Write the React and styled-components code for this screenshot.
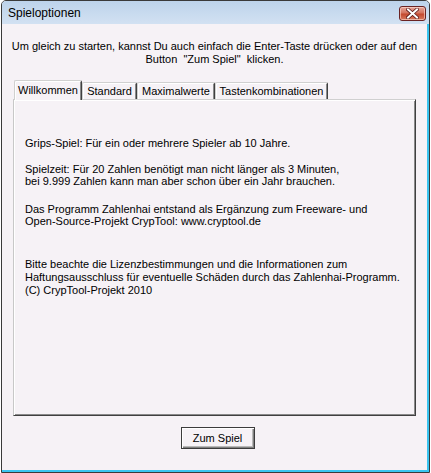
import React from "react";
import styled, { createGlobalStyle } from "styled-components";

const GlobalStyle = createGlobalStyle`
  html, body { margin: 0; padding: 0; background: #ffffff; }
  body { font-family: "Liberation Sans", Arial, sans-serif; }
  * { box-sizing: border-box; }
`;

const Window = styled.div`
  margin-left: 1px;
  width: 429px;
  height: 473px;
  border: 1px solid #3a3a3a;
  border-radius: 5px 5px 0 0;
  display: flex;
  flex-direction: column;
  overflow: hidden;
  background: #f6f2f6;
`;

const TitleBar = styled.div`
  height: 23px;
  flex: none;
  display: flex;
  align-items: flex-start;
  justify-content: space-between;
  padding: 5px 3px 0 6px;
  background: linear-gradient(#bdd3eb, #d2e1f2);
`;

const Title = styled.div`
  font-family: "Liberation Sans", Arial, sans-serif;
  font-size: 12px;
  line-height: 15px;
  color: #000;
`;

const CloseButton = styled.div`
  width: 27px;
  height: 15px;
  border: 1px solid #6a2323;
  border-radius: 3px;
  background: linear-gradient(#e6a69a 0%, #d4745f 45%, #c4492f 55%, #d77a5f 100%);
  box-shadow: inset 0 0 0 1px rgba(255, 220, 210, 0.6);
  display: flex;
  align-items: center;
  justify-content: center;
`;

const Client = styled.div`
  flex: 1;
  display: flex;
  flex-direction: column;
  border-right: 2px solid #39c4ef;
  border-bottom: 2px solid #39c4ef;
  background: #f6f2f6;
`;

const Intro = styled.p`
  margin: 16px 0 0;
  text-align: center;
  font-size: 11px;
  line-height: 13px;
  color: #000;
  white-space: pre-wrap;
`;

const TabRow = styled.div`
  margin-top: 14px;
  padding-left: 12px;
  display: flex;
  align-items: flex-end;
`;

const Tab = styled.div`
  position: relative;
  width: ${(p) => p.$w}px;
  height: ${(p) => (p.$active ? 20 : 17)}px;
  margin-bottom: ${(p) => (p.$active ? -1 : 0)}px;
  z-index: ${(p) => (p.$active ? 2 : 1)};
  background: #f6f2f6;
  border-top: 1px solid #d0d0d0;
  border-left: 1px solid #d0d0d0;
  border-right: 1px solid #404040;
  border-radius: 2px 2px 0 0;
  box-shadow: inset 1px 1px 0 #ffffff, inset -1px 0 0 #8a8a8a;
  display: flex;
  align-items: ${(p) => (p.$active ? "flex-start" : "center")};
  justify-content: center;
  padding-top: ${(p) => (p.$active ? 3 : 0)}px;
  font-size: 11px;
  line-height: 13px;
  color: #000;
  white-space: nowrap;
`;

const Panel = styled.div`
  margin-left: 11px;
  width: 403px;
  height: 317px;
  border-top: 1px solid #d0d0d0;
  border-left: 1px solid #c8c8c8;
  border-right: 1px solid #404040;
  border-bottom: 1px solid #404040;
  box-shadow: inset 1px 1px 0 #ffffff, inset -1px -1px 0 #8a8a8a;
  padding-left: 11px;
  position: relative;
  z-index: 1;
`;

const Para = styled.p`
  margin: ${(p) => p.$gap}px 0 0;
  font-size: 11px;
  line-height: ${(p) => p.$lh}px;
  color: #000;
`;

const Footer = styled.div`
  margin-top: 11px;
  padding-left: 6px;
  display: flex;
  justify-content: center;
`;

const Button = styled.button`
  width: 74px;
  height: 22px;
  padding: 0;
  border: 1px solid #3c3c3c;
  background: #f6f2f6;
  box-shadow: inset 1px 1px 0 #ffffff, inset -1px -1px 0 #808080, inset -2px -2px 0 #b8b8b8;
  font-family: "Liberation Sans", Arial, sans-serif;
  font-size: 11px;
  color: #000;
`;

export default function App() {
  return (
    <>
      <GlobalStyle />
      <Window>
        <TitleBar>
          <Title>Spieloptionen</Title>
          <CloseButton>
            <svg width="13" height="11" viewBox="0 0 13 11">
              <path d="M2 1.5 L11 9.5 M11 1.5 L2 9.5" stroke="#5a1a1a" strokeWidth="3.6" strokeLinecap="square" />
              <path d="M2 1.5 L11 9.5 M11 1.5 L2 9.5" stroke="#ffffff" strokeWidth="2" strokeLinecap="square" />
            </svg>
          </CloseButton>
        </TitleBar>
        <Client>
          <Intro>
            {"Um gleich zu starten, kannst Du auch einfach die Enter-Taste drücken oder auf den\nButton  \"Zum Spiel\"  klicken."}
          </Intro>
          <TabRow>
            <Tab $active $w={68}>Willkommen</Tab>
            <Tab $w={55}>Standard</Tab>
            <Tab $w={78}>Maximalwerte</Tab>
            <Tab $w={113}>Tastenkombinationen</Tab>
          </TabRow>
          <Panel>
            <Para $gap={37} $lh={12}>Grips-Spiel: Für ein oder mehrere Spieler ab 10 Jahre.</Para>
            <Para $gap={14} $lh={12}>
              Spielzeit: Für 20 Zahlen benötigt man nicht länger als 3 Minuten,
              <br />
              bei 9.999 Zahlen kann man aber schon über ein Jahr brauchen.
            </Para>
            <Para $gap={16} $lh={12}>
              Das Programm Zahlenhai entstand als Ergänzung zum Freeware- und
              <br />
              Open-Source-Projekt CrypTool: www.cryptool.de
            </Para>
            <Para $gap={31} $lh={13}>
              Bitte beachte die Lizenzbestimmungen und die Informationen zum
              <br />
              Haftungsausschluss für eventuelle Schäden durch das Zahlenhai-Programm.
              <br />
              (C) CrypTool-Projekt 2010
            </Para>
          </Panel>
          <Footer>
            <Button>Zum Spiel</Button>
          </Footer>
        </Client>
      </Window>
    </>
  );
}
